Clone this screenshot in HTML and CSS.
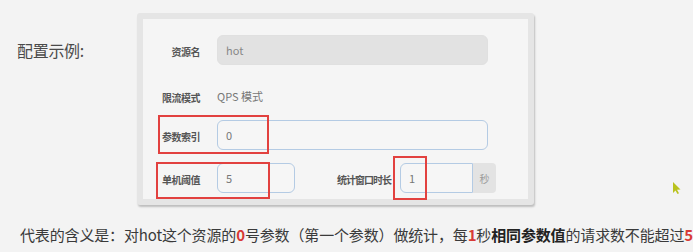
FILE: index.html
```html
<!DOCTYPE html>
<html>
  <head>
    <link rel="stylesheet" href="styles.css">
  </head>
  <body>
    <div class="top">
      <div class="title">配置示例:</div>
      <div class="card">
        <div class="row row-name">
          <div class="label">资源名</div>
          <div class="input disabled wide">hot</div>
        </div>
        <div class="row row-mode">
          <div class="label">限流模式</div>
          <div class="value">QPS 模式</div>
        </div>
        <div class="row row-index">
          <div class="label">参数索引</div>
          <div class="input wide">0</div>
        </div>
        <div class="row row-count">
          <div class="label">单机阈值</div>
          <div class="input short">5</div>
          <div class="label window-label">统计窗口时长</div>
          <div class="group">
            <div class="input window">1</div>
            <div class="addon">秒</div>
          </div>
        </div>
        <div class="mark mark-index"></div>
        <div class="mark mark-count"></div>
        <div class="mark mark-window"></div>
      </div>
    </div>
    <p class="desc">代表的含义是：对hot这个资源的<b class="num">0</b>号参数（第一个参数）做统计，每<b class="num">1</b>秒<b>相同参数值</b>的请求数不能超过<b class="num">5</b></p>
    <svg class="cursor" width="9" height="14" viewBox="0 0 9 14">
      <path d="M1 1 L1 12 L3.5 9.5 L5.5 13 L7 12.2 L5 8.8 L8.5 8.5 Z" fill="#b9c21e" />
    </svg>
  </body>
</html>
```

FILE: styles.css
```css
body {
  margin: 0;
  background-color: #f3f3f3;
  font-family: "Noto Sans CJK SC", "Noto Sans", sans-serif;
  color: #444;
  position: relative;
  height: 252px;
  overflow: hidden;
}
.top {
  display: flex;
  padding: 13px 0 0 17px;
}
.title {
  width: 120px;
  margin-top: 27px;
  font-size: 16px;
  line-height: 20px;
  color: #4a4a4a;
  letter-spacing: -0.3px;
}
.card {
  position: relative;
  width: 385px;
  height: 164px;
  padding-top: 16px;
  background-color: #f5f5f5;
  border: 6px solid #e5e5e5;
  border-radius: 3px;
  box-shadow: 1px 2px 2px rgba(0, 0, 0, 0.22);
}
.row {
  display: flex;
  align-items: center;
  height: 30px;
}
.row-mode {
  margin-top: 16px;
}
.row-index {
  margin-top: 9px;
}
.row-count {
  margin-top: 13px;
}
.label {
  width: 57px;
  margin-right: 17px;
  text-align: right;
  font-size: 10px;
  font-weight: bold;
  color: #555;
  letter-spacing: -0.5px;
  padding-top: 3px;
}
.value {
  font-size: 11px;
  color: #777;
}
.input {
  height: 30px;
  box-sizing: border-box;
  border: 1px solid #b4cbe4;
  border-radius: 6px;
  background-color: #f6f6f6;
  padding-left: 8px;
  display: flex;
  align-items: center;
  font-size: 11px;
  color: #777;
}
.input.disabled {
  background-color: #e2e2e2;
  border-color: #e0e0e0;
  color: #888;
}
.wide {
  width: 271px;
}
.short {
  width: 78px;
}
.window-label {
  width: 54px;
  margin-left: 42px;
  margin-right: 9px;
  letter-spacing: -1px;
  white-space: nowrap;
}
.group {
  display: flex;
}
.input.window {
  width: 73px;
  border-radius: 6px 0 0 6px;
}
.addon {
  width: 23px;
  height: 30px;
  background-color: #e3e3e3;
  border-radius: 0 4px 4px 0;
  display: flex;
  align-items: center;
  justify-content: center;
  font-size: 10px;
  color: #999;
}
.mark {
  position: absolute;
  border: 2px solid #e2413f;
  box-sizing: border-box;
}
.mark-index {
  left: 15px;
  top: 96px;
  width: 111px;
  height: 39px;
}
.mark-count {
  left: 13px;
  top: 143px;
  width: 114px;
  height: 37px;
}
.mark-window {
  left: 250px;
  top: 137px;
  width: 34px;
  height: 44px;
}
.desc {
  margin: 20px 0 0 20px;
  font-size: 15px;
  line-height: 20px;
  letter-spacing: -0.15px;
  color: #3a3a3a;
  white-space: nowrap;
}
.desc b {
  color: #222;
}
.desc .num {
  color: #d83a36;
}
.cursor {
  position: absolute;
  left: 672px;
  top: 181px;
}
```
